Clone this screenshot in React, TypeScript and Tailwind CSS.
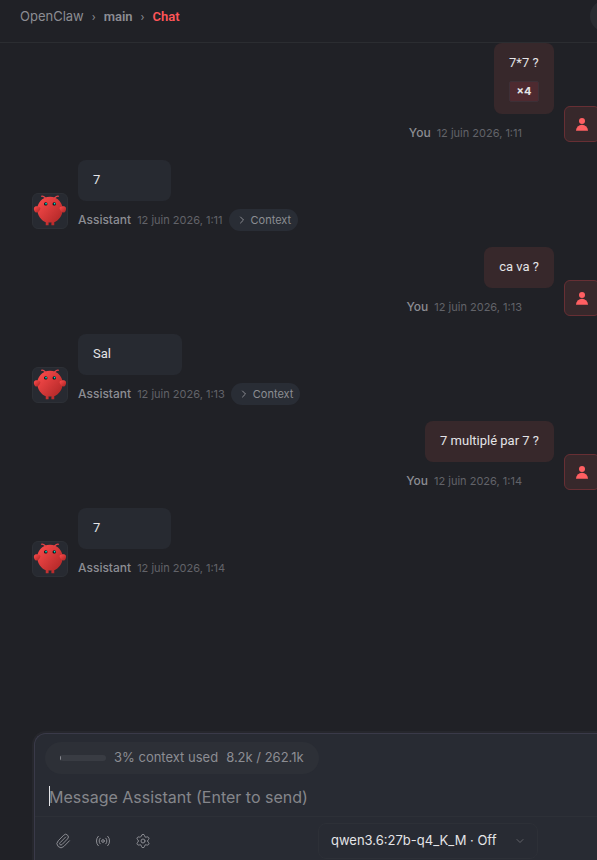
import { useState } from 'react';
import { ChevronDown, ChevronRight, Paperclip, Radio, Settings } from 'lucide-react';

interface Message {
  id: number;
  role: 'user' | 'assistant';
  text: string;
  time: string;
  repeat?: number;
  hasContext?: boolean;
}

const messages: Message[] = [
  { id: 1, role: 'user', text: '7*7 ?', time: '12 juin 2026, 1:11', repeat: 4 },
  { id: 2, role: 'assistant', text: '7', time: '12 juin 2026, 1:11', hasContext: true },
  { id: 3, role: 'user', text: 'ca va ?', time: '12 juin 2026, 1:13' },
  { id: 4, role: 'assistant', text: 'Sal', time: '12 juin 2026, 1:13', hasContext: true },
  { id: 5, role: 'user', text: '7 multiplé par 7 ?', time: '12 juin 2026, 1:14' },
  { id: 6, role: 'assistant', text: '7', time: '12 juin 2026, 1:14' },
];

function ClawLogo() {
  return (
    <svg viewBox="0 0 120 120" className="size-[34px]" fill="none" aria-hidden="true">
      <defs>
        <linearGradient id="claw" x1="0%" y1="0%" x2="100%" y2="100%">
          <stop offset="0%" stopColor="#ff4d4d" />
          <stop offset="100%" stopColor="#a82323" />
        </linearGradient>
      </defs>
      <path
        d="M60 10C30 10 15 35 15 55C15 75 30 95 45 100L45 110L55 110L55 100C55 100 60 102 65 100L65 110L75 110L75 100C90 95 105 75 105 55C105 35 90 10 60 10Z"
        fill="url(#claw)"
      />
      <path d="M20 45C5 40 0 50 5 60C10 70 20 65 25 55C28 48 25 45 20 45Z" fill="url(#claw)" />
      <path d="M100 45C115 40 120 50 115 60C110 70 100 65 95 55C92 48 95 45 100 45Z" fill="url(#claw)" />
      <path d="M45 15Q35 5 30 8M75 15Q85 5 90 8" stroke="#e04448" strokeWidth="4" strokeLinecap="round" />
      <circle cx="45" cy="35" r="6" fill="#050810" />
      <circle cx="75" cy="35" r="6" fill="#050810" />
      <circle cx="46" cy="34" r="3" fill="#00e5cc" />
      <circle cx="76" cy="34" r="3" fill="#00e5cc" />
    </svg>
  );
}

function UserIcon() {
  return (
    <svg viewBox="0 0 24 24" className="size-[18px]" fill="currentColor" aria-hidden="true">
      <circle cx="12" cy="8" r="4" />
      <path d="M20 21a8 8 0 1 0-16 0" />
    </svg>
  );
}

function UserMessage({ message }: { message: Message }) {
  return (
    <li className="flex items-end justify-end gap-[10px]">
      <div className="flex flex-col items-end gap-2">
        <div className="rounded-lg bg-[#37282b] px-[15px] pt-[9px] pb-[11px] font-[Roboto,sans-serif] text-[13px] leading-[21px] text-[#e4e4e7]">
          <p>{message.text}</p>
          {message.repeat && (
            <span className="mt-2 mb-px block h-[21px] w-[30px] rounded-xs border border-[#3d3037] bg-[#4e2a30] text-center font-[Inter,sans-serif] text-[11px] leading-[19px] font-bold">
              ×{message.repeat}
            </span>
          )}
        </div>
        <div className="flex h-[22px] items-center gap-1.5 pr-8">
          <span className="text-xs font-medium text-[#8c8d93]">You</span>
          <time className="text-[11px] text-[#626369]">{message.time}</time>
        </div>
      </div>
      <div className="mb-0.5 flex size-9 shrink-0 items-center justify-center rounded-md border border-[#672f34] bg-[#37282b] text-[#ff5f62]">
        <UserIcon />
      </div>
    </li>
  );
}

function AssistantMessage({ message }: { message: Message }) {
  return (
    <li className="flex items-end gap-[10px]">
      <div className="mb-0.5 flex size-9 shrink-0 items-center justify-center rounded-md border border-[#2d3036] bg-[#272a31]">
        <ClawLogo />
      </div>
      <div className="flex flex-col items-start gap-2">
        <p className="rounded-lg bg-[#272a31] pt-[9px] pr-[71px] pb-[11px] pl-[15px] font-[Roboto,sans-serif] text-[13px] leading-[21px] text-[#e4e4e7]">
          {message.text}
        </p>
        <div className="flex h-[22px] items-center gap-1.5">
          <span className="text-xs font-medium text-[#8c8d93]">Assistant</span>
          <time className="text-[11px] text-[#626369]">{message.time}</time>
          {message.hasContext && (
            <button
              type="button"
              className="flex h-[22px] items-center gap-[3px] rounded-full bg-[#292d35] px-[7px] text-[11px] text-[#8c8d93]"
            >
              <ChevronRight size={12} />
              Context
            </button>
          )}
        </div>
      </div>
    </li>
  );
}

export default function App() {
  const [draft, setDraft] = useState('');

  return (
    <div className="flex h-screen flex-col overflow-hidden bg-[#202126] font-[Inter,sans-serif] text-[#8c8d93]">
      <header className="flex shrink-0 items-center justify-between border-b border-[#2b2d31] pb-[10px] pl-5">
        <nav aria-label="Breadcrumb" className="flex items-center gap-2 pt-0.5 font-[Roboto,sans-serif] text-[13px]">
          <a href="#home" className="font-[Inter,sans-serif]">
            OpenClaw
          </a>
          <span>›</span>
          <a href="#main" className="font-semibold">
            main
          </a>
          <span>›</span>
          <span className="font-semibold text-[#ff5558]">Chat</span>
        </nav>
        <button type="button" aria-label="Account" className="-mr-[25px] size-8 rounded-full bg-[#2a2c31]" />
      </header>

      <ul className="-mr-[3px] flex min-h-0 flex-1 flex-col gap-4 pl-8">
        {messages.map((message) =>
          message.role === 'user' ? (
            <UserMessage key={message.id} message={message} />
          ) : (
            <AssistantMessage key={message.id} message={message} />
          )
        )}
      </ul>

      <form className="ml-[34px] shrink-0 rounded-tl-xl border-t border-l border-[#3a3a49] bg-[#282b33] shadow-[0_0_0_2px_#26272d]">
        <div className="px-[10px] pt-2">
          <div className="flex h-8 w-fit items-center gap-2 rounded-full bg-[#2d3037] px-[15px] text-[13px]">
            <div className="flex h-1.5 w-[46px] overflow-hidden rounded-full bg-[#393c43]">
              <div className="bg-[#8c8d93]" style={{ width: '3%' }} />
            </div>
            <span>3% context used</span>
            <span>8.2k / 262.1k</span>
          </div>
        </div>
        <div className="relative mt-3 px-[14px] pb-2">
          <textarea
            rows={1}
            aria-label="Message"
            value={draft}
            onChange={(e) => setDraft(e.target.value)}
            placeholder="Message Assistant (Enter to send)"
            className="block h-[22px] w-full resize-none overflow-hidden bg-transparent text-base leading-[22px] text-[#e4e4e7] placeholder-[#85868b] outline-none"
          />
          <span className="absolute top-0 left-[14px] h-5 w-px bg-[#e4e4e7]" />
        </div>
        <div className="flex items-center justify-between border-t border-[#2d3037] pt-[6px] pr-[59px] pb-px pl-5">
          <div className="flex items-center gap-6">
            <button type="button" aria-label="Attach file">
              <Paperclip size={16} strokeWidth={1.5} />
            </button>
            <button type="button" aria-label="Voice">
              <Radio size={16} strokeWidth={1.5} />
            </button>
            <button type="button" aria-label="Settings">
              <Settings size={16} strokeWidth={1.5} />
            </button>
          </div>
          <div className="relative">
            <select
              aria-label="Model"
              className="block h-9 w-[220px] appearance-none rounded-lg border border-[#2d3037] bg-[#282b33] px-3 text-[13px] text-[#e4e4e7]"
            >
              <option>qwen3.6:27b-q4_K_M · Off</option>
            </select>
            <ChevronDown size={12} className="pointer-events-none absolute top-3 right-3 text-[#626369]" />
          </div>
        </div>
      </form>
    </div>
  );
}
